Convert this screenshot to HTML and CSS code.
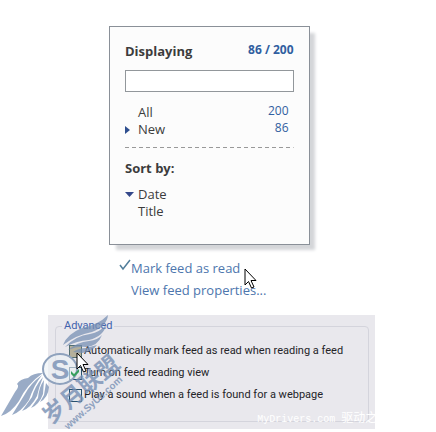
FILE: index.html
```
<!DOCTYPE html>
<html lang="en">
<head>
<meta charset="utf-8">
<title>Feed view</title>
<link rel="stylesheet" href="styles.css">
</head>
<body>
<main class="page">
  <div class="feed">
    <section class="card">
      <header class="card-head">
        <h2><label for="filter">Displaying</label></h2>
        <span class="total">86 / 200</span>
      </header>
      <input class="filter" id="filter" type="text">
      <ul class="list">
        <li><span class="mark"></span><span class="name">All</span><span class="count">200</span></li>
        <li><span class="mark"><svg width="6" height="8" viewBox="0 0 6 8"><path d="M0 0L5 4L0 8Z" fill="#2f4f8f"/></svg></span><span class="name">New</span><span class="count">86</span></li>
      </ul>
      <svg class="rule" height="1"><line x1="0" y1=".5" x2="100%" y2=".5" stroke="#999" stroke-dasharray="4 3"/></svg>
      <h2>Sort by:</h2>
      <ul class="list sort">
        <li><span class="mark"><svg width="9" height="5" viewBox="0 0 9 5"><path d="M0 0H9L4.500 5Z" fill="#34488a"/></svg></span><span class="name">Date</span></li>
        <li><span class="mark"></span><span class="name">Title</span></li>
      </ul>
    </section>
    <nav class="links">
      <a href="#read"><svg class="tick" width="12" height="12" viewBox="0 0 12 12"><path d="M1 6L4 10L11 1" fill="none" stroke="#527e9b" stroke-width="1.500"/></svg>Mark feed as read</a>
      <a href="#properties">View feed properties...</a>
      <svg class="cursor" width="13" height="21" viewBox="0 0 13 21"><path d="M1 1V17L4.500 13.500L7.500 20L10 19L7 12.500H12Z" fill="#fff" stroke="#000"/></svg>
    </nav>
  </div>
  <section class="panel">
    <fieldset class="advanced">
      <legend>Advanced</legend>
      <label class="hot"><input type="checkbox">Automatically mark feed as read when reading a feed</label>
      <label><input type="checkbox" checked>Turn on feed reading view</label>
      <label><input type="checkbox">Play a sound when a feed is found for a webpage</label>
    </fieldset>
    <svg class="emblem" width="140" height="122" viewBox="0 310 140 122">
      <g class="wings">
        <path d="M63 345Q67 334 82 328Q98 325 108 315Q107 326 92 332Q76 335 63 345Z"/>
        <path d="M65 347Q75 336 90 334Q100 332 106 325Q104 336 89 340Q76 341 65 347Z"/>
        <path d="M68 350Q77 342 89 341Q98 340 102 335Q98 346 86 347Q77 346 68 350Z"/>
        <path d="M73 352Q79 348 86 348L97 345Q92 352 82 353Z"/>
        <path d="M43 373Q33 373 28 378Q20 379 17 384Q20 386 15 392L1 416Q11 413 19 401Q27 384 43 373Z"/>
        <path d="M42 375Q30 384 25 394L12 415Q21 412 29 400Q34 385 42 375Z"/>
        <path d="M43 377Q35 386 32 397L22 411Q31 408 37 396Q39 387 43 377Z"/>
        <path d="M44 380Q39 387 38 398L31 408Q39 405 43 394Z"/>
        <path d="M46 383L44 395L40 402Q48 398 49 387Z"/>
      </g>
      <ellipse class="ring" cx="60" cy="369" rx="17" ry="15"/>
      <text class="initial" x="60" y="379" text-anchor="middle">S</text>
      <text class="brand" transform="translate(51 425) rotate(-40)">岁月联盟</text>
      <text class="site" transform="translate(68 430) rotate(-42)">www.SyUe.com</text>
    </svg>
    <svg class="check" width="13" height="13" viewBox="0 0 13 13"><path d="M3 5V8L6 11L11 6V3L6 8Z" fill="#37a05e"/></svg>
    <svg class="cursor panel-cursor" width="13" height="21" viewBox="0 0 13 21"><path d="M1 1V17L4.500 13.500L7.500 20L10 19L7 12.500H12Z" fill="#fff" stroke="#000"/></svg>
    <p class="credit">MyDrivers.com <span>驱动之</span></p>
  </section>
</main>
</body>
</html>
```
FILE: styles.css
```
* { box-sizing: border-box; }
body { margin: 0; background: #fff; color: #3c3c3c; font: 13px/17px "Open Sans", "Noto Sans", sans-serif; }
h2, p, ul { margin: 0; padding: 0; }
h2 { font-size: 13px; line-height: 18px; }
ul { list-style: none; }
.page { padding-top: 26px; }
.feed { margin-left: 25%; width: 46%; }
.card { padding: 15px 15px 24px; border: 1px solid #8a9098; background: #fcfcfc; box-shadow: 6px 6px 3px -1px #d4d6d9; }
.card-head { display: flex; justify-content: space-between; }
.total { color: #315fa0; font-size: 12px; font-weight: 700; line-height: 16px; }
.filter { display: block; width: 100%; height: 22px; margin-top: 10px; border: 1px solid #92979b; background: #fff; }
.list { margin-top: 12px; }
.list li { display: flex; align-items: center; }
.mark { display: flex; width: 13px; }
.name { flex: 1; }
.count { color: #315fa0; font-size: 12px; line-height: 14px; padding: 0 5px 3px 0; }
.rule { display: block; width: 100%; margin: 9px 0 11px; }
.sort { margin-top: 9px; }
.links { position: relative; display: flex; flex-direction: column; gap: 4px; margin: 14px 0 0 22px; }
.links a { position: relative; color: #4d76ad; line-height: 18px; text-decoration: none; white-space: nowrap; }
.tick { position: absolute; left: -12px; top: 0; }
.cursor { position: absolute; left: 113px; top: 9px; }
.panel { position: relative; margin: 16px 14% 0 11%; padding: 5px 6px 7px 7px; background: #e9e8ed; }
.advanced { display: flex; flex-direction: column; margin: 0; padding: 8px 7px 15px 13px; border: 1px solid #d4d4dc; border-radius: 4px; color: #242428; font: 11px/14px Roboto, sans-serif; }
.advanced legend { margin-left: -7px; padding: 0 2px; color: #3f62ac; line-height: 12px; }
.advanced label { display: flex; align-items: center; gap: 2px; height: 22px; white-space: nowrap; }
.advanced input { appearance: none; width: 13px; height: 13px; margin: 0; border: 1px solid #28506d; background: #e5e8eb; }
.advanced .hot input { border-color: #536f70; background: #b5b09b; }
.emblem { position: absolute; left: -48px; top: -5px; }
.wings { fill: #7890b4; opacity: .75; }
.ring { fill: #edf1f5; fill-opacity: .6; stroke: #8fa2bd; stroke-width: 2px; }
.emblem text { fill: #7890b4; font-family: "Noto Sans CJK SC", sans-serif; font-weight: 700; opacity: .8; }
.emblem .initial { font: 700 28px "Liberation Sans", sans-serif; }
.emblem .brand { font-size: 23px; }
.emblem .site { font: 700 10px "Liberation Sans", sans-serif; }
.check { position: absolute; left: 20px; top: 51px; }
.panel-cursor { left: 28px; top: 37px; }
.credit { position: absolute; left: 64%; bottom: 0; color: #fff; font: 10px/18px "Liberation Mono", monospace; white-space: nowrap; }
.credit span { font: 12px/18px "Noto Sans CJK SC", sans-serif; }
```
